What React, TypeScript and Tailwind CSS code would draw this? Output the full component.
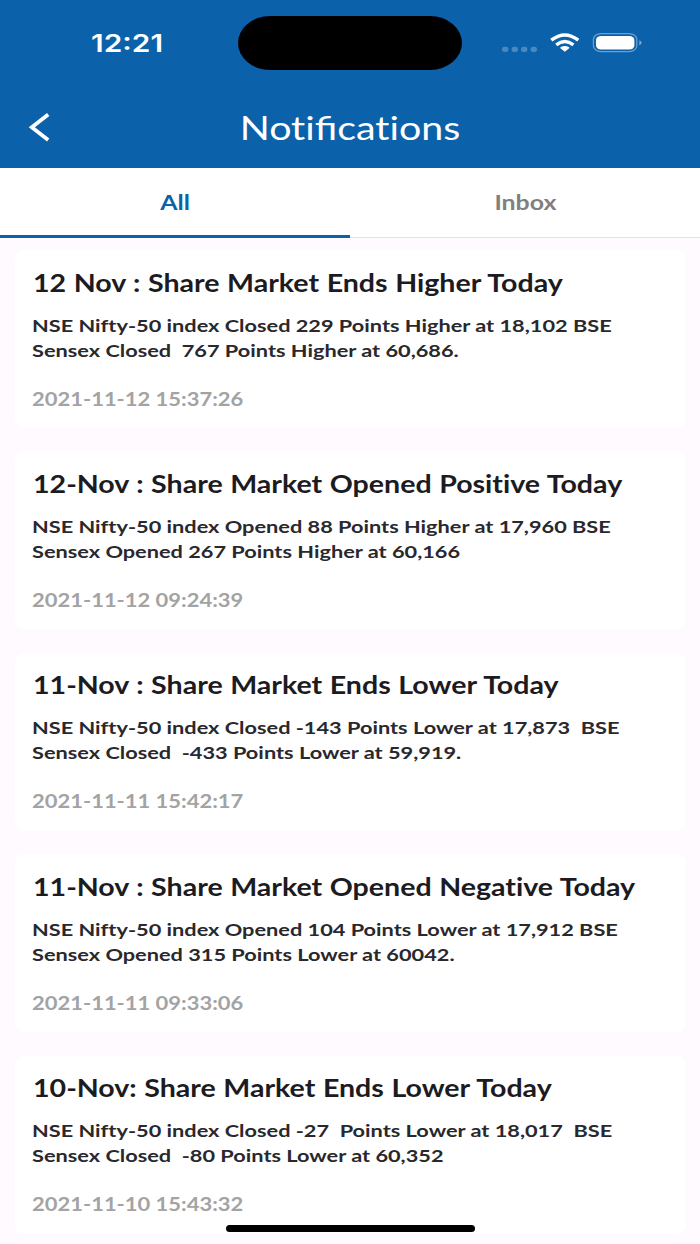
import clsx from 'clsx'

type Notification = {
  title: string
  body: string
  date: string
}

const notifications: Notification[] = [
  {
    title: '12 Nov : Share Market Ends Higher Today',
    body: 'NSE Nifty-50 index Closed 229 Points Higher at 18,102 BSE\nSensex Closed  767 Points Higher at 60,686.',
    date: '2021-11-12 15:37:26',
  },
  {
    title: '12-Nov : Share Market Opened Positive Today',
    body: 'NSE Nifty-50 index Opened 88 Points Higher at 17,960 BSE\nSensex Opened 267 Points Higher at 60,166',
    date: '2021-11-12 09:24:39',
  },
  {
    title: '11-Nov : Share Market Ends Lower Today',
    body: 'NSE Nifty-50 index Closed -143 Points Lower at 17,873  BSE\nSensex Closed  -433 Points Lower at 59,919.',
    date: '2021-11-11 15:42:17',
  },
  {
    title: '11-Nov : Share Market Opened Negative Today',
    body: 'NSE Nifty-50 index Opened 104 Points Lower at 17,912 BSE\nSensex Opened 315 Points Lower at 60042.',
    date: '2021-11-11 09:33:06',
  },
  {
    title: '10-Nov: Share Market Ends Lower Today',
    body: 'NSE Nifty-50 index Closed -27  Points Lower at 18,017  BSE\nSensex Closed  -80 Points Lower at 60,352',
    date: '2021-11-10 15:43:32',
  },
]

function StatusBar() {
  return (
    <div className="flex h-[88px] items-start pt-4">
      <div className="flex h-[54px] w-[238px] items-center pl-[91px]">
        <span className="origin-left scale-x-[1.22] font-['Inter',sans-serif] text-[24.5px] font-semibold">12:21</span>
      </div>
      <div className="h-[54px] w-[224px] rounded-[32px/27px] bg-black" />
      <svg className="h-[54px] w-[238px]" viewBox="462 16 238 54" fill="#fff">
        <g opacity="0.25">
          <rect x="502" y="46.7" width="6.4" height="5.4" rx="2.4" />
          <rect x="511.6" y="46.7" width="6.4" height="5.4" rx="2.4" />
          <rect x="521" y="46.7" width="6.4" height="5.4" rx="2.4" />
          <rect x="530.6" y="46.7" width="6.4" height="5.4" rx="2.4" />
        </g>
        <path d="M564.8 51.8 L560.4 48.2 Q560 47.6 560.8 47.1 Q564.8 44.7 568.8 47.1 Q569.6 47.6 569.2 48.2 Z" />
        <g fill="none" stroke="#fff" strokeWidth="3.4">
          <path d="M556.2 44.9 Q564.8 38.3 573.4 44.9" />
          <path d="M551.3 40.2 Q564.8 29.6 578.3 40.2" />
        </g>
        <rect x="593.4" y="33.6" width="43.4" height="18" rx="7.5" ry="6" fill="none" stroke="#fff" strokeOpacity="0.4" strokeWidth="1.3" />
        <rect x="596" y="36" width="38.4" height="13.4" rx="5" ry="4" />
        <path d="M639.3 40.3 Q641.6 41.2 641.6 42.8 Q641.6 44.4 639.3 45.3 Z" opacity="0.45" />
      </svg>
    </div>
  )
}

function Header() {
  return (
    <div className="flex h-20 items-center">
      <button className="flex h-full w-[70px] items-center pb-0.5 pl-7" aria-label="Back">
        <svg className="h-8 w-6" viewBox="0 0 24 32" fill="none" stroke="#fff" strokeWidth="3.8">
          <path d="M20.2 3.4 L3.8 16.2 L20.2 29" />
        </svg>
      </button>
      {/* tracking stops the "ti" ligature, "fi" keeps its own */}
      <h1 className="flex-1 scale-x-[1.23] text-center text-[32px] leading-[40px] tracking-[0.01px]">
        Noti<span className="tracking-normal">fi</span>cations
      </h1>
      <div className="w-[70px]" />
    </div>
  )
}

function Tab({ label, active }: { label: string; active?: boolean }) {
  return (
    <button
      className={clsx(
        'flex h-[70px] flex-1 items-center justify-center pt-0.5 text-[20.4px] font-bold',
        active ? 'border-b-[3px] border-[#0b61aa] text-[#0b61aa]' : 'border-b border-[#e7e0ec] pb-0.5 text-[#808080]',
      )}
    >
      <span className="scale-x-[1.22]">{label}</span>
    </button>
  )
}

function NotificationCard({ title, body, date }: Notification) {
  return (
    <div className="h-[178px] rounded-[9px] bg-white pt-[16.6px] pl-[17.5px] whitespace-pre [font-variant-ligatures:none]">
      <h2 className="ml-[0.5px] w-max origin-left scale-x-[1.2] text-[23.8px] leading-8 font-bold text-[#1c1b1f] [word-spacing:0.5px]">
        {title}
      </h2>
      <p className="mt-3.5 w-max origin-left scale-x-[1.215] text-[17.9px] leading-[25px] font-bold text-[#29282d]">
        {body}
      </p>
      <p className="mt-6 w-max origin-left scale-x-[1.22] text-[18px] leading-[25px] font-bold text-[#a3a3a3]">
        {date}
      </p>
    </div>
  )
}

export default function App() {
  return (
    <div className="relative flex h-[1244px] w-[700px] flex-col overflow-hidden bg-[#fefaff] font-['Lato',sans-serif]">
      <div className="bg-[#0b61aa] text-white">
        <StatusBar />
        <Header />
      </div>
      <div className="flex bg-white">
        <Tab label="All" active />
        <Tab label="Inbox" />
      </div>
      <div className="flex flex-col gap-[23.4px] px-[14.5px] pt-3">
        {notifications.map((n) => (
          <NotificationCard key={n.date} {...n} />
        ))}
      </div>
      {/* Home indicator */}
      <div className="absolute bottom-3 left-[225.5px] h-[7.5px] w-[249.5px] rounded-full bg-black" />
    </div>
  )
}
